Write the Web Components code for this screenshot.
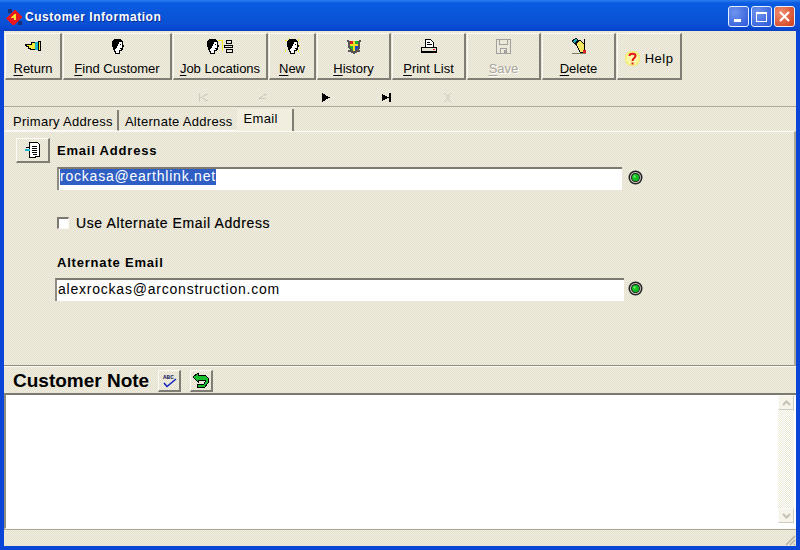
<!DOCTYPE html>
<html>
<head>
<meta charset="utf-8">
<title>Customer Information</title>
<style>
  html, body { margin: 0; padding: 0; background: #ece9d8; }
  body { font-family: "Liberation Sans", Arial, sans-serif; color: #000; }
</style>
</head>
<body>
<app-window>
  <title-bar slot="title">Customer Information</title-bar>
  <tool-bar slot="tools">
    <tool-button icon="return" w="57" key="R" rest="eturn"></tool-button>
    <tool-button icon="head" w="109" key="F" rest="ind Customer"></tool-button>
    <tool-button icon="jobs" w="95" key="J" rest="ob Locations"></tool-button>
    <tool-button icon="new" w="47" key="N" rest="ew"></tool-button>
    <tool-button icon="history" w="74" key="H" rest="istory"></tool-button>
    <tool-button icon="print" w="74" key="P" rest="rint List"></tool-button>
    <tool-button icon="save" w="74" key="S" rest="ave" disabled></tool-button>
    <tool-button icon="delete" w="74" key="D" rest="elete"></tool-button>
    <tool-button icon="help" w="65" rest="Help" inline></tool-button>
  </tool-bar>
  <nav-bar slot="nav"></nav-bar>
  <tab-strip slot="tabs">
    <tab-item>Primary Address</tab-item>
    <tab-item plain>Alternate Address</tab-item>
    <tab-item active>Email</tab-item>
  </tab-strip>
  <email-panel slot="panel"></email-panel>
  <note-section slot="note"></note-section>
  <status-bar slot="status"></status-bar>
</app-window>

<script>
// the head is used three times
const HEAD = `<path d="M4.500 14.500V12H3V10H2V3L4 1H9L11.500 3V5.500L12.500 7.500H11.500V10.500L9.500 11.500H8V14.500z" fill="#fff" stroke="#000"/><path d="M1 3L3 0H9L11 2V3H8V5H7V7H6V9H5V10H3L1 8z" fill="#000"/><rect x="9" y="5" width="1" height="1" fill="#000"/><rect x="9" y="9" width="2" height="1" fill="#000"/>`;

// pixel-ish toolbar icons, all crisp edges
const ICONS = {
  return: `<svg width="16" height="11" viewBox="0 0 16 11" shape-rendering="crispEdges"><path d="M.500 3.500h6v-2h4v7h-5v-1h-2v-2h-2v-1h-1z" fill="#f4e83a" stroke="#000"/><rect x="10" y="1" width="3" height="8" fill="#18b8c8"/><rect x="13" y="0" width="3" height="10" fill="#000"/><rect x="14" y="1" width="1" height="8" fill="#f4e83a"/></svg>`,
  head: `<svg width="13" height="15" viewBox="0 0 13 15" shape-rendering="crispEdges">${HEAD}</svg>`,
  jobs: `<svg width="28" height="15" viewBox="0 0 28 15" shape-rendering="crispEdges">${HEAD}<path d="M12 1.500h4V12" fill="none" stroke="#f2e820"/><path d="M20.500 1.500h5v3h-5zM18.500 6.500h8v2h-8zM20.500 10.500h6v3h-6z" fill="none" stroke="#000"/></svg>`,
  new: `<svg width="15" height="17" viewBox="0 0 15 17" shape-rendering="crispEdges"><path d="M0 2h2v1H0zM13 1h1v2h-1zM14 7h1v1h-1zM13 12h1v2h-1zM0 12h1v2H0zM3 0h1v1H3z" fill="#f2e820"/><g transform="translate(1 1)">${HEAD}</g></svg>`,
  history: `<svg width="14" height="15" viewBox="0 0 14 15" shape-rendering="crispEdges"><path d="M0 1h2v1h10V1h2v2h-1v6l-2 2h2v2h-2l-4 2-4-2H1v-2h2L1 9V3H0z" fill="#555"/><rect x="3" y="2" width="4" height="4" fill="#e02020"/><rect x="7" y="2" width="4" height="4" fill="#20b030"/><path d="M3 6h4v6L4 10 3 9z" fill="#20b030"/><path d="M7 6h4v3l-1 1-3 2z" fill="#2040d0"/><rect x="6" y="2" width="2" height="10" fill="#f0e020"/><rect x="3" y="5" width="8" height="2" fill="#f0e020"/></svg>`,
  print: `<svg width="16" height="15" viewBox="0 0 16 15" shape-rendering="crispEdges"><path d="M4.500 .500h5l3 3v5h-8z" fill="#fff" stroke="#000"/><path d="M6 3h3M6 5h5" stroke="#000"/><path d="M.500 8.500h15v5H.500z" fill="#e8e4d4" stroke="#000"/><rect x="1" y="12" width="14" height="2" fill="#000"/><rect x="12" y="10" width="2" height="1" fill="#e02020"/></svg>`,
  save: `<svg width="15" height="15" viewBox="0 0 15 15" shape-rendering="crispEdges"><path d="M.500 .500h14v14H.500z" fill="none" stroke="#a0a0a0"/><path d="M3.500 .500h8v5h-8zM4.500 9.500h6v5h-6z" fill="#ece9d8" stroke="#a0a0a0"/><rect x="8" y="11" width="2" height="3" fill="#a0a0a0"/></svg>`,
  delete: `<svg width="16" height="16" viewBox="0 0 16 16" shape-rendering="crispEdges"><path d="M1 15h14" stroke="#808060"/><path d="M5 6L9 2L13 6V14H9z" fill="#f2e860" stroke="#000"/><path d="M0 3L5 0L9 3L4 7z" fill="#101010"/><path d="M2 3L5 1L6 2L3 5z" fill="#18b8c8"/><rect x="13" y="1" width="1" height="12" fill="#000"/><rect x="12" y="12" width="3" height="3" fill="#e02020"/></svg>`,
  help: `<svg width="15" height="15" viewBox="0 0 15 15"><circle cx="7.500" cy="7.500" r="7" fill="#faf6a8"/><circle cx="7.500" cy="7.500" r="7" fill="none" stroke="#f4ec40" stroke-dasharray="1 1" stroke-width="2"/><path d="M4.500 5C4.500 2 10.500 2 10.500 5C10.500 7 7.500 7 7.500 10" fill="none" stroke="#e01818" stroke-width="2"/><rect x="6.500" y="11.500" width="2" height="2" fill="#e01818"/></svg>`
};

const raised = `
  border-style: solid; border-width: 1px 2px 2px 1px;
  border-color: #fbfaf4 #7f7d74 #7f7d74 #fbfaf4;
  box-sizing: border-box;`;
// faint dither of the 256-colour capture
const dither = `repeating-conic-gradient(#e3e0cf 0 25%, #f1eee0 0 50%) 0 0 / 2px 2px`;

class AppWindow extends HTMLElement {
  constructor() {
    super();
    this.attachShadow({ mode: 'open' }).innerHTML = `
      <style>
        :host { display: flex; flex-direction: column; width: 800px; height: 550px; box-sizing: border-box;
          background: #0a45d8; overflow: hidden; }
        .body { flex: 1; display: flex; flex-direction: column; margin: 0 4px 4px 4px; background: ${dither}; min-height: 0; }
      </style>
      <slot name="title"></slot>
      <div class="body">
        <slot name="tools"></slot>
        <slot name="nav"></slot>
        <slot name="tabs"></slot>
        <slot name="panel"></slot>
        <slot name="note"></slot>
        <slot name="status"></slot>
      </div>`;
  }
}

class TitleBar extends HTMLElement {
  constructor() {
    super();
    this.attachShadow({ mode: 'open' }).innerHTML = `
      <style>
        :host { display: flex; align-items: center; height: 31px; box-sizing: border-box; padding: 3px 5px 0 6px;
          background: linear-gradient(#2f80ee 0, #0b5be2 3px, #0a58dc 10px, #0a50d4 24px, #0a46d0 29px, #0840c0 31px);
          color: #fff; font: bold 12px "Liberation Sans", Arial, sans-serif; letter-spacing: .55px; text-shadow: 1px 1px 0 #0a2a90; }
        .logo { width: 17px; height: 17px; margin-right: 2px; }
        .txt { flex: 1; }
        .caps { display: flex; gap: 2px; margin-top: -2px; }
        .cap { width: 21px; height: 21px; box-sizing: border-box; border: 1px solid #e8f0ff; border-radius: 3px;
          background: radial-gradient(circle at 30% 30%, #6f95ee, #2a55d8); display: flex; align-items: center; justify-content: center; }
        .cap.close { background: radial-gradient(circle at 30% 30%, #ee9070, #d03a18); }
      </style>
      <svg class="logo" viewBox="0 0 17 17" shape-rendering="crispEdges">
        <path d="M0 9L9 1L16 7V9L8 16H6z" fill="#e81820"/><path d="M8 5h2v6H8V9H5V8z" fill="#f8e030"/>
        <rect x="2" y="0" width="4" height="4" fill="#183078"/><rect x="12" y="12" width="4" height="4" fill="#183078"/>
      </svg>
      <span class="txt"><slot></slot></span>
      <div class="caps">
        <div class="cap"><svg width="13" height="13" shape-rendering="crispEdges"><rect x="2" y="9" width="7" height="3" fill="#fff"/></svg></div>
        <div class="cap"><svg width="13" height="13" shape-rendering="crispEdges"><path d="M1.500 2.500h10v9h-10z" fill="none" stroke="#fff"/><rect x="1" y="2" width="11" height="2" fill="#fff"/></svg></div>
        <div class="cap close"><svg width="13" height="13"><path d="M2 2L11 11M11 2L2 11" stroke="#fff" stroke-width="2"/></svg></div>
      </div>`;
  }
}

class ToolBar extends HTMLElement {
  constructor() {
    super();
    this.attachShadow({ mode: 'open' }).innerHTML = `
      <style>
        :host { display: flex; padding: 2px 0 0 1px; height: 49px; box-sizing: border-box; gap: 1px; }
      </style><slot></slot>`;
  }
}

class ToolButton extends HTMLElement {
  constructor() {
    super();
    const icon = ICONS[this.getAttribute('icon')] || '';
    const key = this.getAttribute('key');
    const rest = this.getAttribute('rest');
    const inline = this.hasAttribute('inline');
    this.attachShadow({ mode: 'open' }).innerHTML = `
      <style>
        :host { display: flex; width: ${this.getAttribute('w')}px; height: 47px; font: 13px "Liberation Sans", Arial, sans-serif; }
        .b { ${raised} flex: 1; display: flex; flex-direction: ${inline ? 'row' : 'column'}; align-items: center; justify-content: center;
          gap: ${inline ? 5 : 0}px; white-space: nowrap; color: #000; }
        .ic { height: 19px; display: flex; align-items: center; justify-content: center; margin-bottom: 5px; }
        .row { padding-top: 4px; }
        .row .ic { margin: 0; }
        .row .t { letter-spacing: .5px; }
        .t { line-height: 15px; }
        :host([disabled]) .t { color: #a8a69c; text-shadow: 1px 1px 0 #fff; }
        u { text-underline-offset: 2px; }
      </style>
      <div class="b ${inline ? 'row' : ''}">
        <div class="ic">${icon}</div>
        <div class="t">${key ? `<u>${key}</u>` : ''}${rest}</div>
      </div>`;
  }
}

class NavBar extends HTMLElement {
  constructor() {
    super();
    const g = '#cfccc0';
    this.attachShadow({ mode: 'open' }).innerHTML = `
      <style>
        :host { display: block; height: 27px; box-sizing: border-box; border-bottom: 1px solid #aca899; }
        .row { display: flex; height: 100%; padding: 8px 0 0 195px; align-items: center; gap: 52px; box-sizing: border-box; }
        svg { width: 9px; height: 9px; flex: none; }
        svg:nth-child(2) { margin: 0 2px 0 -2px; }
      </style>
      <div class="row">
        <svg viewBox="0 0 9 9" shape-rendering="crispEdges"><path d="M.500 0v9M8.500 1L2 4.500 8.500 8" fill="none" stroke="${g}"/></svg>
        <svg viewBox="0 0 9 9" shape-rendering="crispEdges"><path d="M8.500 1L1 5h7" fill="none" stroke="${g}"/></svg>
        <svg viewBox="0 0 9 9" shape-rendering="crispEdges"><path d="M1 0L9 4.500 1 9z" fill="#000"/></svg>
        <svg viewBox="0 0 9 9" shape-rendering="crispEdges"><path d="M0 1L7 4.500 0 8z" fill="#000"/><rect x="7" y="0" width="2" height="9" fill="#000"/></svg>
        <svg viewBox="0 0 9 9"><path d="M1 0L7 4.500 1 9M8 0L3 4.500 8 9" fill="none" stroke="${g}"/></svg>
      </div>`;
  }
}

class TabStrip extends HTMLElement {
  constructor() {
    super();
    this.attachShadow({ mode: 'open' }).innerHTML = `
      <style>
        :host { display: flex; height: 24px; padding: 2px 0 0 1px; box-sizing: border-box; align-items: stretch; }
      </style><slot></slot>`;
  }
}

class TabItem extends HTMLElement {
  constructor() {
    super();
    this.attachShadow({ mode: 'open' }).innerHTML = `
      <style>
        :host { display: block; font: 13px/19px "Liberation Sans", Arial, sans-serif; letter-spacing: .3px; padding: 2px 4px 0 8px; box-sizing: border-box;
          border-right: 2px solid #7f7d74; border-bottom: 1px solid #fbfaf4; white-space: nowrap; margin-top: 1px; }
        :host([plain]) { border-right: 0; padding-left: 6px; padding-right: 4px; }
        :host([active]) { padding: 0 14px 0 7px; margin-top: 0; border-bottom: 0; background: #f1eee0; line-height: 20px; }
      </style><slot></slot>`;
  }
}

class TextField extends HTMLElement {
  constructor() {
    super();
    const sel = this.hasAttribute('selected');
    this.attachShadow({ mode: 'open' }).innerHTML = `
      <style>
        :host { display: block; flex: 1; height: 23px; box-sizing: border-box; background: #fff;
          border-top: 2px solid #7b7970; border-left: 2px solid #8e8c82; padding: 0 0 0 1px;
          font: 14px/18px "Liberation Sans", Arial, sans-serif; letter-spacing: .78px; white-space: nowrap; }
        .s { background: #2f5fc4; color: #fff; display: inline-block; height: 16px; line-height: 15px; vertical-align: top; }
      </style>
      ${sel ? '<span class="s"><slot></slot></span>' : '<slot></slot>'}`;
  }
}

class LookupDot extends HTMLElement {
  constructor() {
    super();
    this.attachShadow({ mode: 'open' }).innerHTML = `
      <style>:host { display: block; width: 15px; height: 15px; flex: none; margin-top: -2px; }</style>
      <svg width="15" height="15" viewBox="0 0 15 15">
        <circle cx="7.500" cy="7.500" r="7" fill="#222"/><circle cx="7.500" cy="7.500" r="5.500" fill="#c8c8c0"/>
        <circle cx="7.500" cy="7.500" r="4.500" fill="#222"/><circle cx="7.500" cy="7.500" r="3.500" fill="#10c020"/>
        <circle cx="6.500" cy="6.500" r="1.300" fill="#60f060"/>
      </svg>`;
  }
}

class EmailPanel extends HTMLElement {
  constructor() {
    super();
    this.attachShadow({ mode: 'open' }).innerHTML = `
      <style>
        :host { display: block; height: 235px; box-sizing: border-box; padding: 6px 0 0 12px;
          border-top: 1px solid #fbfaf4; border-right: 2px solid #aca899; border-bottom: 1px solid #8f8c80;
          font: 13px "Liberation Sans", Arial, sans-serif; }
        .head { display: flex; align-items: center; height: 25px; }
        .pick { ${raised} width: 34px; height: 25px; display: flex; align-items: center; justify-content: center; margin-right: 7px; }
        label { font-weight: bold; letter-spacing: .8px; line-height: 15px; }
        .line { display: flex; align-items: center; gap: 6px; width: 620px; }
        .l1 { margin: 4px 0 0 41px; width: 586px; }
        .chk { display: flex; align-items: center; margin: 25px 0 0 41px; font-size: 14px; letter-spacing: .62px; -webkit-text-stroke: .2px #000; }
        .box { width: 12px; height: 12px; box-sizing: border-box; background: #fff; border-style: solid; border-width: 2px 1px 1px 2px;
          border-color: #7b7970 #fbfaf4 #fbfaf4 #7b7970; margin-right: 7px; }
        .alt { margin: 24px 0 0 41px; display: block; }
        .l2 { margin: 8px 0 0 39px; width: 588px; gap: 4px; }
      </style>
      <div class="head">
        <div class="pick">
          <svg width="17" height="17" viewBox="0 0 17 17" shape-rendering="crispEdges">
            <path d="M5.500 .500h8l2 2v12h-10z" fill="#fff" stroke="#000"/>
            <path d="M8 4h5M8 6h5M8 8h5M8 10h5M8 12h5" stroke="#000"/>
            <path d="M1.500 5.500h4v10h6" fill="#fff" stroke="#000"/><rect x="1" y="7" width="5" height="2" fill="#18b8c8"/>
          </svg>
        </div>
        <label>Email Address</label>
      </div>
      <div class="line l1"><text-field selected>rockasa@earthlink.net</text-field><lookup-dot></lookup-dot></div>
      <div class="chk"><div class="box"></div>Use Alternate Email Address</div>
      <label class="alt">Alternate Email</label>
      <div class="line l2"><text-field>alexrockas@arconstruction.com</text-field><lookup-dot></lookup-dot></div>`;
  }
}

class NoteSection extends HTMLElement {
  constructor() {
    super();
    this.attachShadow({ mode: 'open' }).innerHTML = `
      <style>
        :host { display: flex; flex-direction: column; flex: 1; min-height: 0; }
        .head { display: flex; align-items: center; height: 27px; box-sizing: border-box; padding: 1px 0 0 9px; border-top: 1px solid #fbfaf4; }
        h2 { margin: 0 9px 0 0; font: bold 19px "Liberation Sans", Arial, sans-serif; }
        .mini { ${raised} width: 23px; height: 22px; display: flex; align-items: center; justify-content: center; margin-right: 9px; }
        .area { flex: 1; display: flex; justify-content: flex-end; background: #fff; border-top: 2px solid #7b7970; border-left: 2px solid #8e8c82;
          border-bottom: 1px solid #fbfaf4; padding: 0 2px 5px 0; min-height: 0; }
        .sb { width: 16px; display: flex; flex-direction: column; justify-content: space-between;
          background: repeating-conic-gradient(#fff 0 25%, #ece9d8 0 50%) 0 0 / 2px 2px; }
        .sb div { ${raised} border-width: 1px; height: 15px; background: #f6f4ea; color: #c4c2b6; display: flex; align-items: center; justify-content: center; border-color: #fbfaf4 #cfccc0 #cfccc0 #fbfaf4; }
      </style>
      <div class="head">
        <h2>Customer Note</h2>
        <div class="mini">
          <svg width="17" height="15" viewBox="0 0 17 15">
            <text x="2" y="6" font-family="Liberation Mono" font-size="6" font-weight="bold" fill="#202060">ABC</text>
            <path d="M3 10L6 13.500L15 6" fill="none" stroke="#1020c0" stroke-width="1.500"/>
          </svg>
        </div>
        <div class="mini">
          <svg width="16" height="15" viewBox="0 0 16 15" shape-rendering="crispEdges">
            <path d="M0 4L5 0V2H12L15 5V10L12 14H4V11H11L12 9V7H5V9z" fill="#18c030" stroke="#000" stroke-width="1"/>
          </svg>
        </div>
      </div>
      <div class="area">
        <div class="sb">
          <div><svg width="9" height="6"><path d="M1 5L4.500 1.500 8 5" fill="none" stroke="currentColor" stroke-width="2"/></svg></div>
          <div><svg width="9" height="6"><path d="M1 1L4.500 4.500 8 1" fill="none" stroke="currentColor" stroke-width="2"/></svg></div>
        </div>
      </div>`;
  }
}

class StatusBar extends HTMLElement {
  constructor() {
    super();
    this.attachShadow({ mode: 'open' }).innerHTML = `
      <style>
        :host { display: flex; justify-content: flex-end; align-items: flex-end; height: 17px; box-sizing: border-box; border-top: 1px solid #aca899; }
      </style>
      <svg width="12" height="12" viewBox="0 0 12 12"><path d="M11 2L2 11M11 6L6 11M11 10L10 11" stroke="#aca899" stroke-width="1.200"/></svg>`;
  }
}

customElements.define('app-window', AppWindow);
customElements.define('title-bar', TitleBar);
customElements.define('tool-bar', ToolBar);
customElements.define('tool-button', ToolButton);
customElements.define('nav-bar', NavBar);
customElements.define('tab-strip', TabStrip);
customElements.define('tab-item', TabItem);
customElements.define('text-field', TextField);
customElements.define('lookup-dot', LookupDot);
customElements.define('email-panel', EmailPanel);
customElements.define('note-section', NoteSection);
customElements.define('status-bar', StatusBar);
</script>
</body>
</html>
